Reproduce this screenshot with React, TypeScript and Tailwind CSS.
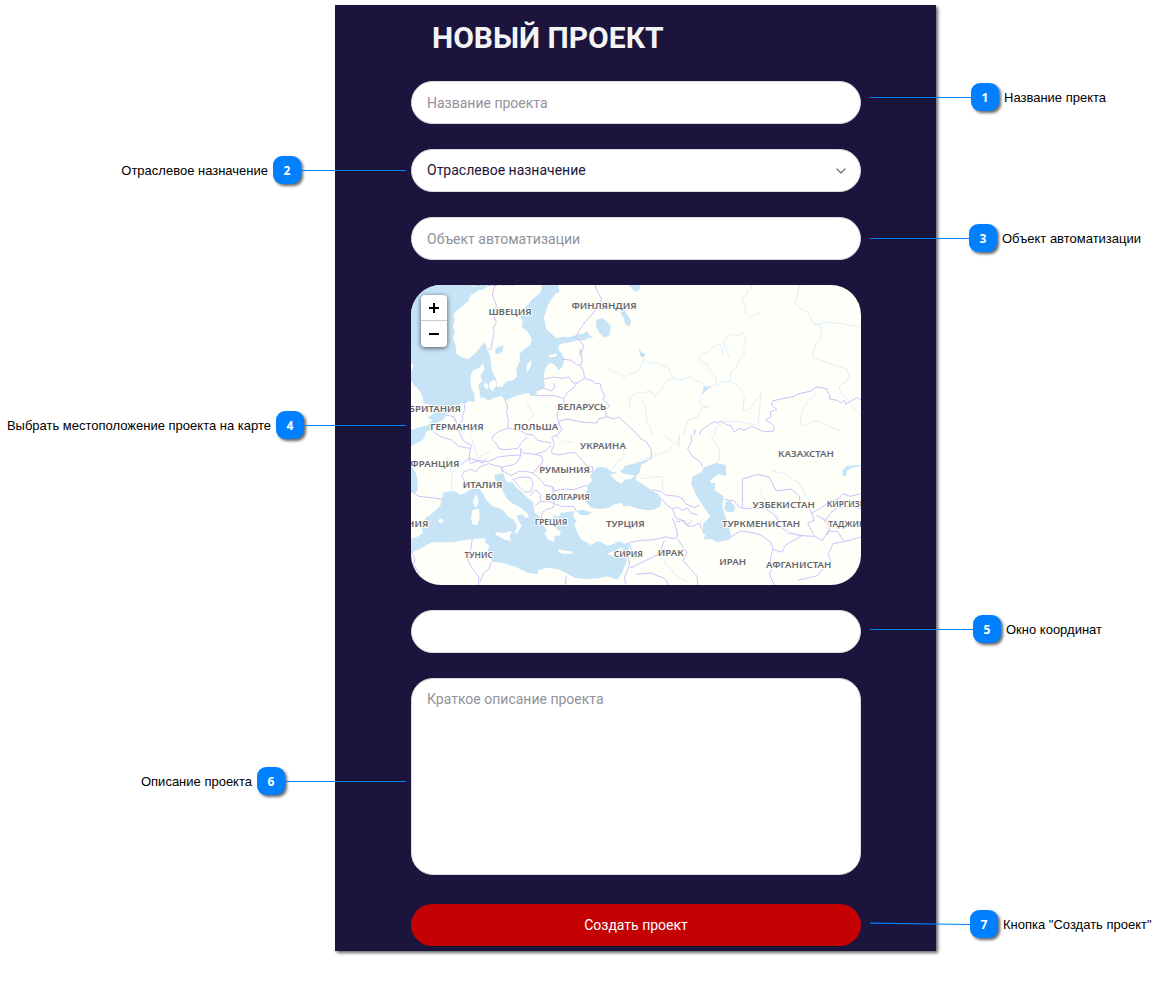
import type { ReactNode } from "react";
import { ChevronDown } from "lucide-react";
import clsx from "clsx";

type CalloutProps = {
  number: number;
  text: string;
  side: "left" | "right";
  className: string;
  line: string;
  slanted?: boolean;
};

function Callout({ number, text, side, className, line, slanted }: CalloutProps) {
  return (
    <div
      className={clsx(
        "pointer-events-none absolute flex h-7 items-center",
        side === "right" ? "left-full ml-[9px]" : "right-full mr-[5px] flex-row-reverse",
        className,
      )}
    >
      {slanted ? (
        <svg className={clsx("h-1 shrink-0", line)} viewBox="0 0 100 4" preserveAspectRatio="none">
          <path d="M0 1.2 100 2.5" stroke="#0080ff" strokeWidth="1.2" />
        </svg>
      ) : (
        <span className={clsx("h-px shrink-0 bg-[#0080ff]", line)} />
      )}
      <span className="flex size-7 shrink-0 items-center justify-center rounded-[9px] bg-[#0080ff] pt-px font-['Open_Sans',sans-serif] text-[12px] font-bold text-white shadow-[2px_2px_3px_rgba(0,0,0,0.6)]">
        {number}
      </span>
      <span className="mx-[5px] whitespace-nowrap pt-0.5 font-['Liberation_Sans',sans-serif] text-[13px] text-black">
        {text}
      </span>
    </div>
  );
}

function Row({ children }: { children: ReactNode }) {
  return <div className="relative flex flex-col">{children}</div>;
}

const water = [
  // North Sea and the Baltic
  "M0 0H440L446 20 432 28 420 45 410 62 405 80 398 98 402 112 405 132 420 145 435 160 455 155 475 157 495 150 520 145 530 138 536 152 550 156 530 160 520 166 500 165 480 172 455 175 443 180 442 195 452 205 460 222 455 245 443 256 430 238 418 234 405 245 400 262 398 280 402 300 398 312 378 318 376 328 382 333 358 332 353 323 325 330 298 340 282 347 272 333 250 338 235 347 215 336 204 345 190 350 172 348 160 358 150 354 136 372 116 378 106 390 96 404 80 412 66 433 45 440 42 455 34 466 0 484Z",
  "M0 540 12 558 19 580 20 615 12 624 0 622Z",
  // Mediterranean
  "M0 762 22 754 36 744 30 722 44 698 62 686 88 664 92 640 98 622 130 618 150 630 172 618 186 608 206 612 216 626 226 645 244 664 262 668 276 676 292 696 306 702 316 716 318 730 310 742 318 746 332 722 322 706 316 692 334 688 346 700 354 696 350 686 326 666 302 654 286 638 272 612 252 584 250 570 276 564 284 586 294 594 304 590 312 604 328 618 350 638 366 650 370 682 386 696 398 722 408 736 400 744 412 766 430 770 430 752 446 752 450 742 428 724 436 712 424 688 442 696 448 684 472 680 490 678 486 696 498 708 490 716 498 742 512 764 540 780 562 768 590 782 610 776 622 768 640 776 656 772 652 804 644 836 634 862 620 884 590 874 562 880 526 882 490 878 462 862 438 852 408 848 382 856 380 868 352 864 314 846 276 834 244 830 228 802 236 782 220 772 224 760 184 762 122 772 62 772 34 788 8 800 0 806Z",
  "M498 678 516 674 526 678 542 682 530 690 506 690Z",
  // Black Sea and Azov
  "M555 550 565 545 586 548 602 560 622 560 636 552 642 542 668 536 682 530 712 528 692 538 688 548 686 562 676 574 674 586 690 594 706 606 722 616 742 628 751 642 748 664 728 674 710 676 676 670 654 662 636 664 634 654 610 658 594 668 566 672 540 668 522 648 520 632 530 612 526 602 544 586 536 574Z",
  // Caspian
  "M915 534 945 540 945 572 920 568 898 586 900 594 914 594 910 614 938 634 934 662 940 686 958 742 960 762 920 772 884 754 875 742 877 716 898 694 878 666 852 624 840 594 846 574 870 562 880 546Z",
  "M944 650 956 648 972 664 970 680 948 682 940 672Z",
  // lakes
  "M555 105 575 99 588 110 600 125 595 150 580 158 566 144 556 128Z",
  "M628 85 640 76 656 98 660 112 654 125 642 116 638 98Z",
  "M652 0 686 0 686 14 674 20Z",
  "M504 190 512 196 510 216 504 204Z",
  "M682 190 692 202 703 208 700 218 688 214Z",
  "M878 754 896 758 882 766ZM878 304 900 306 888 314 870 332 876 316Z",
  "M1294 556 1308 542 1350 540 1350 544 1322 548 1308 558 1304 574 1296 572Z",
];

const islands = [
  // Scandinavia
  "M236 0H392L390 20 380 30 362 44 350 60 336 72 328 96 336 110 332 126 350 140 362 162 358 180 340 192 326 206 326 230 316 250 318 272 308 286 284 290 274 306 258 305 256 284 244 262 240 240 238 216 230 196 222 172 208 186 192 206 172 222 150 216 136 206 134 180 126 160 132 142 126 122 132 104 126 90 140 74 156 62 172 48 180 30 206 14 214 16Z",
  // Jutland and the Danish isles
  "M190 326 180 306 178 276 186 256 206 248 216 234 220 254 208 272 214 288 202 298 206 322 210 345 192 352Z",
  "M222 292 232 300 230 314 218 304ZM236 292 252 284 256 300 246 318 234 308Z",
  "M350 235 362 226 358 246 350 262 346 248Z",
  "M412 212 436 205 438 214 418 218Z",
  // Britain
  "M0 286 10 302 24 314 34 332 38 356 56 358 70 368 68 386 48 398 64 404 52 420 0 434Z",
  "M0 234 8 240 2 258 0 260Z",
  // Mediterranean islands
  "M198 628 202 650 196 668 186 656 188 640Z",
  "M184 676 204 670 206 700 198 720 184 718 180 698Z",
  "M252 740 276 744 302 738 296 756 300 768 282 764 256 750Z",
  "M442 792 456 796 486 800 482 807 456 806 442 800Z",
  "M588 806 608 798 638 786 626 806 604 812Z",
  "M80 708 92 700 98 706 92 716Z",
  // Crimea
  "M596 570 612 566 622 556 638 566 650 568 672 572 660 582 640 584 632 596 616 588 606 576Z",
];

const rivers = [
  "M592 248 606 262 622 260 640 280 654 266 675 262",
  "M656 372V336L675 326 M662 0",
  "M675 262 688 250 698 222 724 238 738 232 746 242 772 244 778 268 794 282 814 284 838 276 856 288 872 292 884 306 916 300 936 290 956 290 978 300 990 314 1000 334 996 378 1016 372 1050 326",
  "M675 322 692 324 718 318 732 336 756 306 770 284 794 280",
  "M916 300 914 278 900 262 890 238 866 228 864 214 878 206 890 204 904 186 926 178 932 188 936 208",
  "M956 290 960 262 976 248 984 226 1000 210 998 188 1006 178 994 142 982 152 962 148 940 164 938 174 954 216",
  "M1050 326 1046 370 1040 422",
  "M694 348 704 360 706 410 720 430 722 450",
  "M870 332 866 350 874 362 894 366 870 370 860 396 832 406 824 426 820 450",
  "M1022 0 1020 14 1006 20 1006 34 992 42 1004 66 1004 84 1018 98 1032 88 1052 84",
  "M1166 0 1160 30 1150 50 1166 70 1190 82 1206 112 1230 124 1230 160 1214 176 1204 214 1236 228 1264 238 1308 252 1316 280 1284 306 1290 326 1310 342 1326 368 1350 390",
  "M1206 120 1246 112 1290 116 1350 126",
  "M1220 320 1192 348 1176 372 1168 406 1174 426 1204 410 1222 408 1252 422 1288 438",
  "M910 450 914 426 940 410 980 408 1040 422",
  "M806 450 796 474 804 486 806 450 M760 450 788 476 772 498 724 514 694 524",
  "M900 450 912 474 924 488 926 518 916 534",
  "M1078 556 1120 566 1132 576 1164 594 1176 612 1186 636 1206 664",
  "M1048 614 1056 640 1080 664 1104 704 1132 736 1172 754",
  "M180 450 200 520 240 496 M120 620 124 570 108 516 M430 450 458 470 486 472 M600 560 620 530 640 518 636 490",
  "M120 392 140 420 160 450 M348 350 366 392 340 420",
  "M690 582 728 576 752 574 756 614",
  "M744 812 780 852 800 876 826 888",
];

const borders = [
  "M252 0 244 30 256 60 250 96 256 112 246 130 250 142 244 166 240 192 232 194",
  "M552 0 560 22 572 42 560 66 540 92 520 114 504 138 492 160",
  "M492 160 508 168 518 182 510 206 514 226 508 242 518 258 520 280",
  "M456 222 480 226 496 238 508 242",
  "M400 282 430 276 456 280 474 276 486 294 498 294 520 280",
  "M398 310 422 318 432 306 428 294 M378 332H430L458 340 470 322 490 306 498 294",
  "M520 280 546 288 552 296 568 296 572 316 580 330 578 346 596 362 582 378 586 396 562 402 558 414 520 412 498 408 468 402 446 408 440 420",
  "M458 340 460 352 442 372 438 390 442 410 452 434 440 450 422 456 430 478 420 500",
  "M586 394 608 402 622 396 650 420 675 444 690 462 706 470 720 492 722 520 696 530",
  "M282 346 290 366 286 382 292 404 290 430 308 432 330 438 348 448 366 450 380 466 420 474",
  "M290 430 266 438 250 448 242 462 256 476 264 492 290 494 320 490 332 472 348 456",
  "M160 358 162 372 154 392 156 404 140 422 148 450 160 470 180 480 174 520 150 540 M106 390 130 396 140 422 M66 440 90 456 120 464 144 484 176 490",
  "M174 520 200 526 232 530 260 516 292 512 328 510 330 492 M174 520 178 536 200 528 216 534 228 520",
  "M156 608 162 590 152 574 160 560 180 552 194 562 206 546 232 536 272 546 274 562",
  "M328 490 336 504 372 508 404 498 420 480 M330 510 320 530 306 540 272 546 276 558 300 572 322 560 340 558 366 564",
  "M372 508 392 514 396 530 376 552 366 564 M306 584 330 576 358 578 366 596 360 620 342 622 322 602Z",
  "M366 564 390 586 400 600 426 606 430 618 460 612 488 614 524 602",
  "M420 504 444 510 470 504 492 502 514 526 526 542 546 546 544 560 526 562",
  "M358 632 374 614 388 628 388 650 372 662 M388 650 412 648 430 656 426 668 404 674 394 684 390 700 M430 656 452 664 488 664 496 680 M426 606 426 630 430 656",
  "M0 618 24 634 60 638 92 642",
  "M184 762 178 800 170 826 184 850 202 874 204 900 M240 832 234 852 218 864 208 890",
  "M0 800 12 822 8 840 26 866 M466 872 462 900",
  // Caucasus and the Middle East
  "M724 614 752 620 764 630 800 634 816 642 824 656 850 668 866 660",
  "M752 642 770 662 784 672 800 666 812 676 830 670 840 684 860 690 M784 672 796 700 812 704 828 722 842 706",
  "M656 772 690 766 730 764 764 756 794 762 800 746 790 712 784 700",
  "M796 710 820 706 832 724 850 722 866 714 872 734 880 742",
  "M652 812 662 798 656 776 M652 812 656 838 640 880 644 896 M656 850 706 826 746 806 760 766",
  "M800 762 812 780 828 802 816 826 834 848 858 874 860 900 M675 868 720 864 760 880 774 900",
  "M958 756 990 738 1020 742 1050 750 1080 772 1086 792 1078 820 1082 850 1076 868 1090 900",
  "M1086 792 1112 802 1124 780 1152 764 1172 752 1210 754 1234 766 1252 738 1280 740 1300 770 1350 756",
  "M940 642 952 646 970 648 982 664 996 670 H1064 L1090 690 1100 704 1104 722 1132 744 1172 752",
  "M994 670V582L1040 568 1074 576 1096 618 1140 612 1166 634V650L1190 662 1202 684",
  "M1202 684 1228 670 1244 658 1260 652 1286 638 1296 626 1318 634 1350 626 M1216 690 1244 706 1260 682 1280 668 1308 664 1350 670",
  "M1202 684 1210 706 1190 714 1200 734 1210 752 M1234 700 1256 724 1250 750 M1300 770 1266 776 1252 806 1260 830 1230 858 1220 872 1160 886",
  "M875 548 868 530 844 514 830 490 842 470 840 450",
  "M848 450 854 438 846 434 M866 450 870 436 900 416 908 410 920 414 930 408 948 420 960 422 970 442 984 430 1000 436 1022 424 1036 430 1060 440 1088 438 1090 424 1082 416 1064 404 1080 396 1078 380 1098 374 1082 360 1084 348 1110 342 1150 334 1164 326 1200 318 1216 306 1230 308 1248 312 1256 332 1256 342 1278 346 1290 354 1300 346 1304 358 1322 346 1338 338 1350 344",
];

type MapLabel = { x: number; y: number; text: string; small?: boolean; anchor?: "start" | "end" };

const labels: MapLabel[] = [
  { x: 297, y: 91, text: "ШВЕЦИЯ" },
  { x: 579, y: 71, text: "ФИНЛЯНДИЯ" },
  { x: 150, y: 381, text: "БРИТАНИЯ", anchor: "end" },
  { x: 138, y: 435, text: "ГЕРМАНИЯ" },
  { x: 375, y: 435, text: "ПОЛЬША" },
  { x: 512, y: 375, text: "БЕЛАРУСЬ" },
  { x: 576, y: 492, text: "УКРАИНА" },
  { x: 145, y: 547, text: "ФРАНЦИЯ", anchor: "end" },
  { x: 215, y: 609, text: "ИТАЛИЯ" },
  { x: 461, y: 564, text: "РУМЫНИЯ" },
  { x: 470, y: 645, text: "БОЛГАРИЯ", small: true },
  { x: 420, y: 721, text: "ГРЕЦИЯ", small: true },
  { x: 643, y: 727, text: "ТУРЦИЯ" },
  { x: 203, y: 819, text: "ТУНИС", small: true },
  { x: 652, y: 816, text: "СИРИЯ", small: true },
  { x: 52, y: 727, text: "ИСПАНИЯ", anchor: "end" },
  { x: 1185, y: 516, text: "КАЗАХСТАН" },
  { x: 1118, y: 669, text: "УЗБЕКИСТАН" },
  { x: 1050, y: 726, text: "ТУРКМЕНИСТАН" },
  { x: 1247, y: 665, text: "КИРГИЗИЯ", small: true, anchor: "start" },
  { x: 1252, y: 727, text: "ТАДЖИКИСТАН", small: true, anchor: "start" },
  { x: 779, y: 813, text: "ИРАК" },
  { x: 965, y: 841, text: "ИРАН" },
  { x: 1163, y: 849, text: "АФГАНИСТАН" },
];

function ProjectMap() {
  return (
    <div className="relative h-[300px] overflow-hidden rounded-[30px] bg-[#fffffa]">
      <svg className="size-full" viewBox="0 0 1350 900" preserveAspectRatio="xMidYMid slice" role="img" aria-label="Карта">
        <path d={water.join(" ")} fill="#c6e4f6" />
        <path d={islands.join(" ")} fill="#fffffa" />
        <path d="M254 190 278 181 274 200 260 208 252 204Z" fill="#c6e4f6" />
        <g fill="none" strokeLinejoin="round">
          <path d={rivers.join(" ")} stroke="#dceefa" strokeWidth="3" />
          <path d={borders.join(" ")} stroke="#cdc0fa" strokeWidth="3" />
        </g>
        <g
          fill="#65656d"
          stroke="#fffffa"
          strokeWidth="6"
          strokeLinejoin="round"
          paintOrder="stroke"
          className="font-['Noto_Sans','Open_Sans',sans-serif] font-semibold"
        >
          <text x="242" y="2" fontSize="25" textAnchor="middle" opacity="0.3">
            НОРВЕГИЯ
          </text>
          {labels.map((label) => (
            <text
              key={label.text}
              x={label.x}
              y={label.y}
              fontSize={label.small ? 25 : 29}
              textAnchor={label.anchor ?? "middle"}
            >
              {label.text}
            </text>
          ))}
        </g>
      </svg>
      <div className="absolute left-[10px] top-[10px] flex w-[26px] flex-col overflow-hidden rounded-[4px] bg-white shadow-[0_1px_5px_rgba(0,0,0,0.65)]">
        <button type="button" aria-label="Приблизить" className="flex h-[26px] items-center justify-center border-b border-[#ccc]">
          <svg className="size-[10px]" viewBox="0 0 10 10">
            <path d="M5 0v10M0 5h10" stroke="#000" strokeWidth="2" />
          </svg>
        </button>
        <button type="button" aria-label="Отдалить" className="flex h-[26px] items-center justify-center">
          <svg className="size-[10px]" viewBox="0 0 10 10">
            <path d="M0 5h10" stroke="#000" strokeWidth="2" />
          </svg>
        </button>
      </div>
    </div>
  );
}

const field =
  "w-full rounded-[22px] border border-[#dcdce0] bg-white px-[15px] text-[14px] text-[#1b143d] outline-none placeholder:text-[#92929b]";

export default function App() {
  return (
    <main className="flex justify-center overflow-x-hidden bg-white pb-10 pl-[104px] pt-[5px] font-['Roboto',sans-serif]">
      <form
        className="flex w-[601px] shrink-0 flex-col bg-[#1b143d] pb-[5px] pl-[76px] pr-[75px] pt-[13px] shadow-[2px_2px_3px_rgba(0,0,0,0.6)]"
        onSubmit={(e) => e.preventDefault()}
      >
        <h1 className="mb-[23px] pl-[21px] text-[30px] font-bold leading-10 text-[#f4f4f6]">НОВЫЙ ПРОЕКТ</h1>

        <div className="flex flex-col gap-[25px]">
          <Row>
            <input className={clsx(field, "h-[43px]")} placeholder="Название проекта" aria-label="Название проекта" />
            <Callout number={1} text="Название пректа" side="right" className="top-[2px]" line="w-[101px]" />
          </Row>

          <Row>
            <select className={clsx(field, "h-[43px] appearance-none")} aria-label="Отраслевое назначение">
              <option>Отраслевое назначение</option>
            </select>
            <ChevronDown
              className="pointer-events-none absolute right-3 top-[14px] size-4 text-[#77777f]"
              strokeWidth={2}
            />
            <Callout number={2} text="Отраслевое назначение" side="left" className="top-[7px]" line="w-[105px]" />
          </Row>

          <Row>
            <input className={clsx(field, "h-[43px]")} placeholder="Объект автоматизации" aria-label="Объект автоматизации" />
            <Callout number={3} text="Объект автоматизации" side="right" className="top-[7px]" line="w-[99px]" />
          </Row>

          <Row>
            <ProjectMap />
            <Callout
              number={4}
              text="Выбрать местоположение проекта на карте"
              side="left"
              className="top-[126px]"
              line="w-[102px]"
            />
          </Row>

          <Row>
            <input className={clsx(field, "h-[43px]")} aria-label="Координаты" />
            <Callout number={5} text="Окно координат" side="right" className="top-[5px]" line="w-[103px]" />
          </Row>

          <Row>
            <textarea
              className={clsx(field, "h-[197px] resize-none py-[10px] leading-5")}
              placeholder="Краткое описание проекта"
              aria-label="Краткое описание проекта"
            />
            <Callout number={6} text="Описание проекта" side="left" className="top-[89px]" line="w-[121px]" />
          </Row>

          <Row>
            <button type="submit" className="mt-1 h-[42px] rounded-full bg-[#c40204] text-[14px] text-white">
              Создать проект
            </button>
            <Callout number={7} text={'Кнопка "Создать проект"'} side="right" className="top-[10px]" line="w-[100px]" slanted />
          </Row>
        </div>
      </form>
    </main>
  );
}
